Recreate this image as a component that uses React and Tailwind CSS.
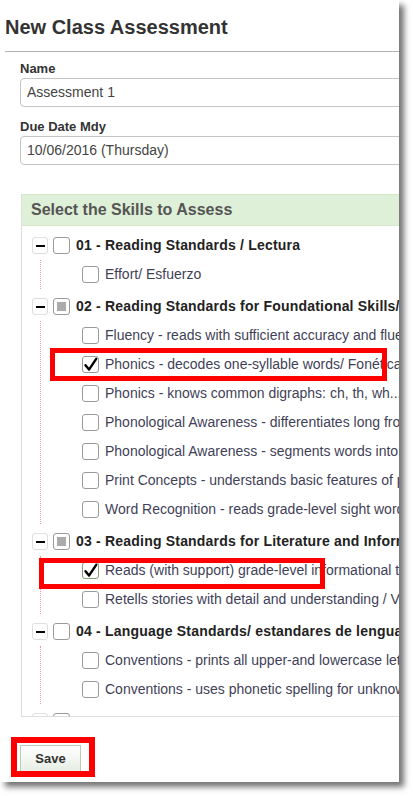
import React from 'react';

const groups = [
  {
    label: '01 - Reading Standards / Lectura',
    state: 'none',
    items: [{ text: 'Effort/ Esfuerzo' }],
  },
  {
    label: '02 - Reading Standards for Foundational Skills/ Destrezas Fundamentales',
    state: 'partial',
    items: [
      { text: 'Fluency - reads with sufficient accuracy and fluency' },
      { text: 'Phonics - decodes one-syllable words/ Fonética', checked: true },
      { text: 'Phonics - knows common digraphs: ch, th, wh...' },
      { text: 'Phonological Awareness - differentiates long from short vowels' },
      { text: 'Phonological Awareness - segments words into sounds' },
      { text: 'Print Concepts - understands basic features of print' },
      { text: 'Word Recognition - reads grade-level sight words' },
    ],
  },
  {
    label: '03 - Reading Standards for Literature and Informational Text',
    state: 'partial',
    items: [
      { text: 'Reads (with support) grade-level informational text', checked: true, focus: true },
      { text: 'Retells stories with detail and understanding / Vuelve a contar' },
    ],
  },
  {
    label: '04 - Language Standards/ estandares de lenguaje',
    state: 'none',
    items: [
      { text: 'Conventions - prints all upper-and lowercase letters' },
      { text: 'Conventions - uses phonetic spelling for unknown words' },
    ],
  },
];

const Checkbox = ({ state, focus }) => {
  return (
    <div
      className={`w-[17px] h-[17px] shrink-0 rounded-[3px] border bg-white flex items-center justify-center ${
        focus ? 'border-[#7fa377]' : 'border-[#9a9a9a]'
      }`}
    >
      {state === 'partial' && <div className="w-[9px] h-[9px] bg-[#ababab]" />}
      {state === 'checked' && (
        <svg width="15" height="15" viewBox="0 0 15 15">
          <path d="M2.5 8.2 L6 12.6 L13.2 1.8" fill="none" stroke="#000" strokeWidth="2.4" strokeLinecap="round" strokeLinejoin="round" />
        </svg>
      )}
    </div>
  );
};

const Toggle = () => (
  <div className="w-[16px] h-[17px] shrink-0 rounded-[3px] border border-[#dedede] bg-white flex items-center justify-center">
    <div className="w-[9px] h-[2px] bg-black" />
  </div>
);

const Group = ({ group, first }) => (
  <div className={first ? '' : 'mt-[3px]'}>
    <div className="h-[29px] flex items-center gap-[5px]">
      <Toggle />
      <Checkbox state={group.state} />
      <span className="ml-[1px] whitespace-nowrap text-[14px] font-bold tracking-[0.2px] text-[#222]">{group.label}</span>
    </div>
    {group.items && (
      <div className="ml-[8px] border-l border-dotted border-[#e0a0a0] pl-[41px]">
        {group.items.map((item) => (
          <div key={item.text} className="h-[29px] flex items-center gap-[6px]">
            <Checkbox state={item.checked ? 'checked' : 'none'} focus={item.focus} />
            <span className="whitespace-nowrap text-[14px] text-[#3f3f58]">{item.text}</span>
          </div>
        ))}
      </div>
    )}
  </div>
);

const App = () => {
  return (
    <div className="w-[413px] h-[796px] bg-white overflow-hidden font-['Liberation_Sans',Arial,sans-serif]">
      <div className="relative w-[399px] h-[782px] bg-white shadow-[5px_5px_6px_rgba(0,0,0,0.55)] overflow-hidden">
        <h1 className="h-[51px] pl-[5px] pt-[15px] text-[20px] leading-[24px] font-bold text-[#333]">New Class Assessment</h1>
        <div className="ml-[5px] h-px bg-[#b3b3b3]" />

        <div className="pl-[20px] mt-[8px]">
          <div className="h-[18px] leading-[18px] text-[13px] font-bold text-[#333]">Name</div>
          <div className="w-[400px] h-[29px] border border-[#c4c4c4] rounded-[4px] flex items-center pl-[6px] text-[14px] text-[#444]">
            Assessment 1
          </div>

          <div className="mt-[11px] h-[18px] leading-[18px] text-[13px] font-bold text-[#333]">Due Date Mdy</div>
          <div className="w-[400px] h-[29px] border border-[#c4c4c4] rounded-[4px] flex items-center pl-[6px] text-[14px] text-[#444]">
            10/06/2016 (Thursday)
          </div>

          <div className="mt-[29px] ml-[1px] w-[400px] border-l border-[#dddddd]">
            <div className="h-[32px] bg-[#dff0d8] border-t border-b border-[#d6e9c6] flex items-center pl-[9px] text-[16px] font-bold text-[#555]">
              Select the Skills to Assess
            </div>
            <div className="h-[491px] border-b border-[#dddddd] overflow-hidden pt-[5px] pl-[10px]">
              {groups.map((g, i) => (
                <Group key={g.label} group={g} first={i === 0} />
              ))}
              <div className="mt-[3px] h-[29px] flex items-center gap-[5px]">
                <Toggle />
                <Checkbox state="none" />
              </div>
            </div>
          </div>

          <button className="mt-[28px] w-[61px] h-[28px] border border-[#b9ceb5] bg-gradient-to-b from-white to-[#e6ede3] text-[13px] font-bold text-[#333]">
            Save
          </button>
        </div>

        {/* annotation boxes */}
        <div className="absolute left-[50px] top-[348px] w-[337px] h-[33px] border-[5px] border-[#ff0000]" />
        <div className="absolute left-[39px] top-[558px] w-[286px] h-[31px] border-[5px] border-[#ff0000]" />
        <div className="absolute left-[11px] top-[737px] w-[84px] h-[40px] border-[6px] border-[#ff0000]" />
      </div>
    </div>
  );
};

export default App;
